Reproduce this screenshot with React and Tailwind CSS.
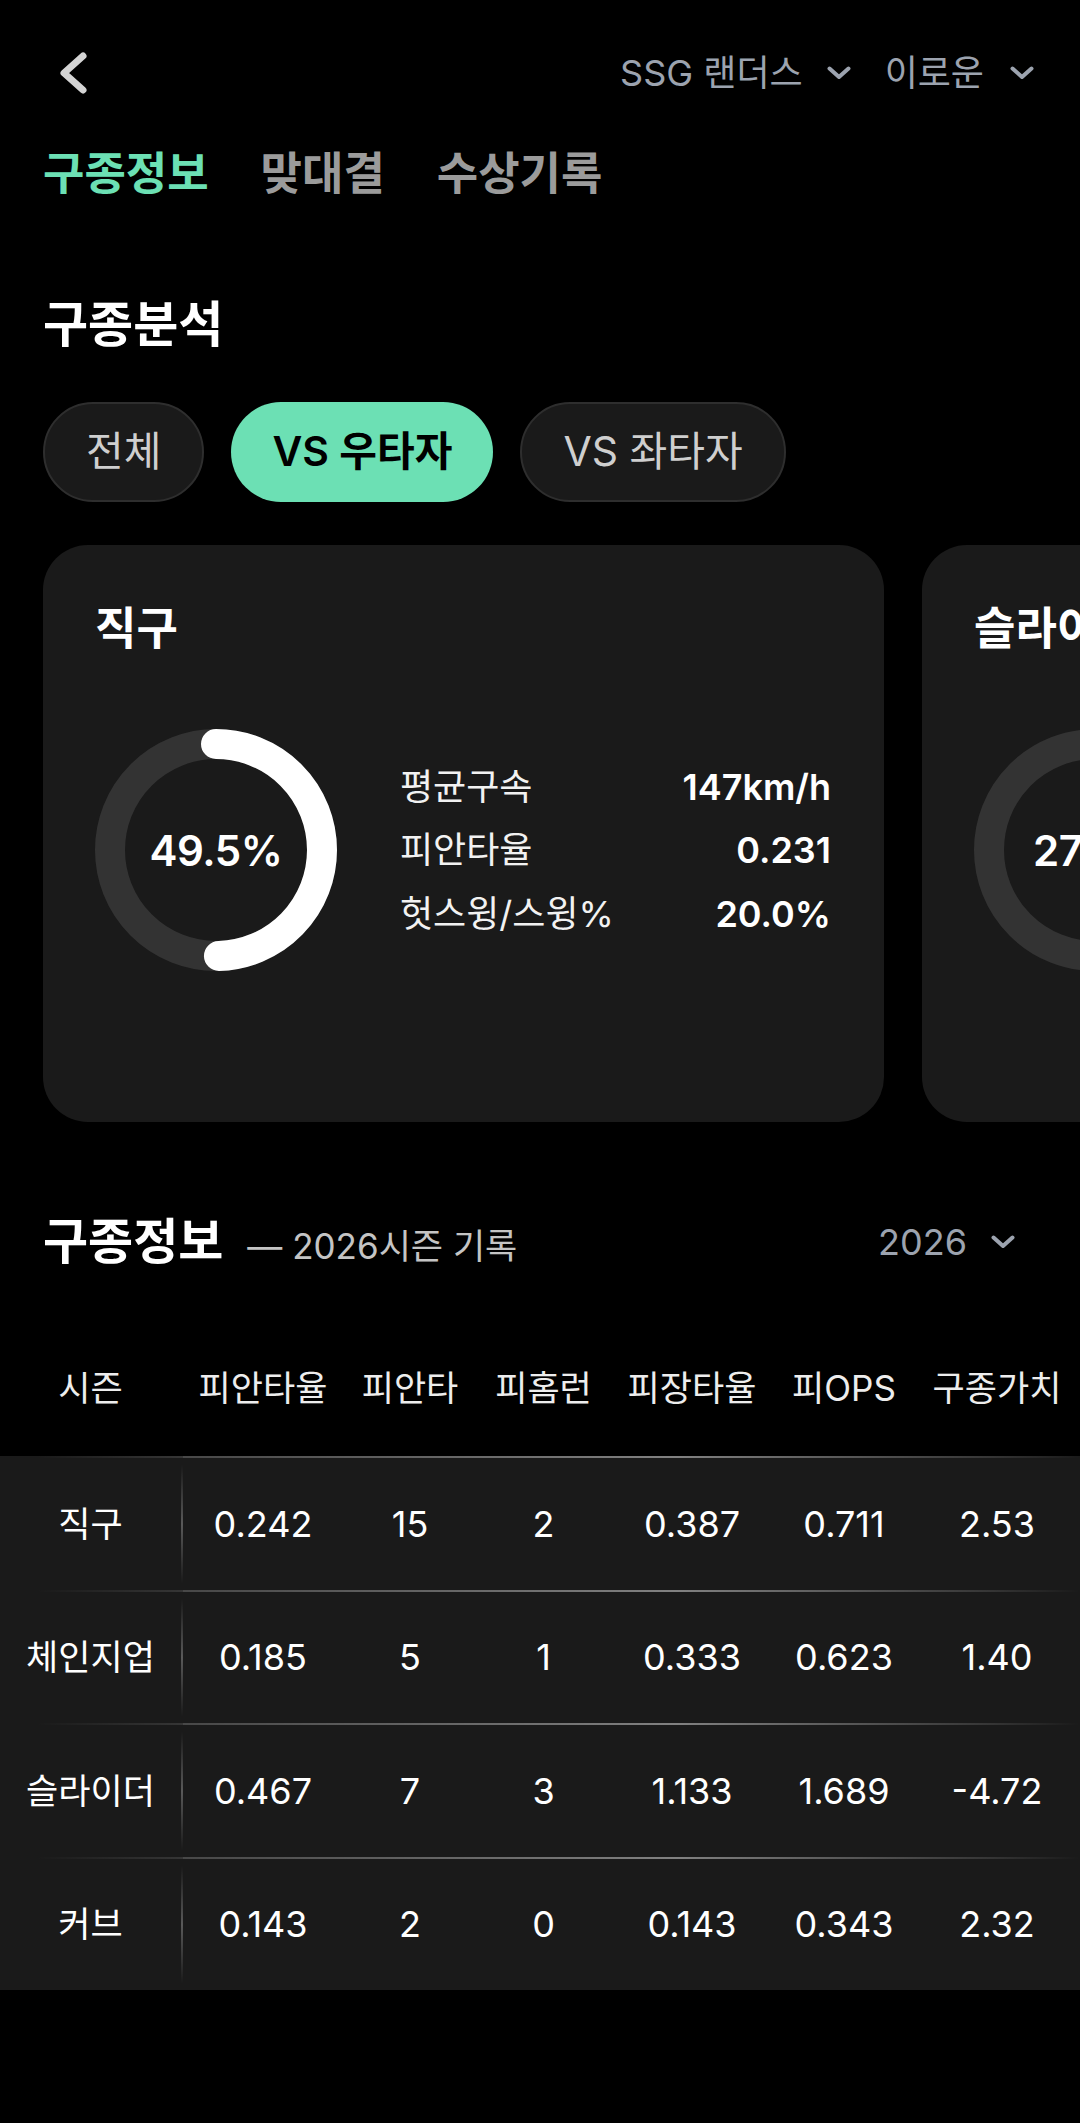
import React from "react";

const FONT = "font-['Inter','Noto_Sans_CJK_KR',sans-serif]";

function ChevronDown({ className = "" }) {
  return (
    <svg width="24" height="14" viewBox="0 0 24 14" className={className}>
      <polyline points="2.5,2.5 12,11 21.5,2.5" fill="none" stroke="#9ca3af" strokeWidth="4" strokeLinecap="round" strokeLinejoin="round" />
    </svg>
  );
}

function Donut({ pct, label }) {
  const r = 106;
  const c = 2 * Math.PI * r;
  return (
    <div className="relative w-[242px] h-[242px] shrink-0">
      <svg width="242" height="242" viewBox="0 0 242 242">
        <circle cx="121" cy="121" r={r} fill="none" stroke="#333333" strokeWidth="30" />
        <circle
          cx="121"
          cy="121"
          r={r}
          fill="none"
          stroke="#ffffff"
          strokeWidth="30"
          strokeLinecap="round"
          strokeDasharray={`${(pct / 100) * c} ${c}`}
          transform="rotate(-90 121 121)"
        />
      </svg>
      <div className="absolute inset-0 flex items-center justify-center text-white text-[42px] font-semibold tracking-[-0.5px]">
        {label}
      </div>
    </div>
  );
}

function PitchCard({ title, pct, label, stats }) {
  return (
    <div className="w-[841px] h-[577px] shrink-0 rounded-[45px] bg-[#1a1a1a] pt-[58px] pl-[52px] pr-[53px]">
      <div className="text-white text-[45px] font-bold leading-[52px]">{title}</div>
      <div className="mt-[74px] flex items-center">
        <Donut pct={pct} label={label} />
        <div className="ml-[63px] flex-1 flex flex-col">
          {stats.map(([k, v]) => (
            <div key={k} className="h-[63.5px] flex items-center justify-between text-[36px] text-[#f2f2f2]">
              <span>{k}</span>
              <span className="font-semibold text-white">{v}</span>
            </div>
          ))}
        </div>
      </div>
    </div>
  );
}

const COLS = ["w-[181px]", "w-[160px]", "w-[134px]", "w-[133px]", "w-[164px]", "w-[140px]", "w-[166px]"];
const HEAD = ["시즌", "피안타율", "피안타", "피홈런", "피장타율", "피OPS", "구종가치"];
const ROWS = [
  ["직구", "0.242", "15", "2", "0.387", "0.711", "2.53"],
  ["체인지업", "0.185", "5", "1", "0.333", "0.623", "1.40"],
  ["슬라이더", "0.467", "7", "3", "1.133", "1.689", "-4.72"],
  ["커브", "0.143", "2", "0", "0.143", "0.343", "2.32"],
];

function RowLine() {
  return (
    <div className="flex h-[2px]">
      <div className="w-[183px] h-full bg-[linear-gradient(to_right,rgba(255,255,255,0)_20%,rgba(255,255,255,0.12))]" />
      <div className="flex-1 h-full bg-[linear-gradient(to_right,rgba(255,255,255,0.2),rgba(255,255,255,0.45)_55%,rgba(255,255,255,0.12)_90%,rgba(255,255,255,0))]" />
    </div>
  );
}

function VLine() {
  return <div className="w-[2px] self-stretch bg-[linear-gradient(to_bottom,rgba(255,255,255,0)_5%,rgba(255,255,255,0.28)_50%,rgba(255,255,255,0)_95%)]" />;
}

export default function App() {
  const cards = [
    {
      title: "직구",
      pct: 49.5,
      label: "49.5%",
      stats: [
        ["평균구속", "147km/h"],
        ["피안타율", "0.231"],
        ["헛스윙/스윙%", "20.0%"],
      ],
    },
    {
      title: "슬라이더",
      pct: 27.3,
      label: "27.3%",
      stats: [
        ["평균구속", "134km/h"],
        ["피안타율", "0.467"],
        ["헛스윙/스윙%", "31.2%"],
      ],
    },
  ];

  return (
    <div className={`${FONT} bg-black min-h-[2123px] w-[1080px] overflow-hidden text-white`}>
      {/* Top bar */}
      <div className="h-[146px] flex items-center justify-between pl-[58px] pr-[46px]">
        <svg width="32" height="44" viewBox="0 0 32 44">
          <polyline points="25,5 6,22 25,39" fill="none" stroke="#d4d4d4" strokeWidth="7" strokeLinecap="round" strokeLinejoin="round" />
        </svg>
        <div className="flex items-center text-[36px] text-[#9ca3af]">
          <span>SSG 랜더스</span>
          <ChevronDown className="ml-[24px]" />
          <span className="ml-[34px]">이로운</span>
          <ChevronDown className="ml-[26px]" />
        </div>
      </div>

      {/* Tabs */}
      <div className="h-[56px] flex items-center pl-[43px] gap-[52px] text-[45px] font-bold">
        <span className="text-[#6ce0b4]">구종정보</span>
        <span className="text-[#9b9b9b]">맞대결</span>
        <span className="text-[#9b9b9b]">수상기록</span>
      </div>

      {/* 구종분석 */}
      <div className="mt-[95px] pl-[43px] h-[56px] flex items-center text-[49px] font-bold text-white">구종분석</div>

      <div className="mt-[49px] pl-[43px] flex gap-[27px]">
        <div className="h-[100px] px-[41px] rounded-full bg-[#1a1a1a] border-2 border-[#2e2e2e] flex items-center text-[41px] text-[#cfcfcf]">
          전체
        </div>
        <div className="h-[100px] px-[41px] rounded-full bg-[#6ce0b4] flex items-center text-[41px] font-semibold text-black">
          VS 우타자
        </div>
        <div className="h-[100px] px-[41px] rounded-full bg-[#1a1a1a] border-2 border-[#2e2e2e] flex items-center text-[41px] text-[#cfcfcf]">
          VS 좌타자
        </div>
      </div>

      {/* Cards */}
      <div className="mt-[43px] pl-[43px] flex gap-[38px] overflow-hidden">
        {cards.map((c) => (
          <PitchCard key={c.title} {...c} />
        ))}
      </div>

      {/* 구종정보 header */}
      <div className="mt-[92px] h-[56px] flex items-center justify-between pl-[43px] pr-[65px]">
        <div className="flex items-baseline">
          <span className="text-[49px] font-bold text-white">구종정보</span>
          <span className="ml-[24px] text-[35px] text-[#c4c4c4]">— 2026시즌 기록</span>
        </div>
        <div className="flex items-center text-[36px] text-[#9ca3af]">
          <span>2026</span>
          <ChevronDown className="ml-[24px]" />
        </div>
      </div>

      {/* Table */}
      <div className="mt-[50px]">
        <div className="h-[136px] flex items-center text-[35px] text-[#ededed]">
          {HEAD.map((h, i) => (
            <React.Fragment key={h}>
              <div className={`${COLS[i]} text-center whitespace-nowrap`}>{h}</div>
              {i === 0 && <div className="w-[2px]" />}
            </React.Fragment>
          ))}
        </div>
        <div className="bg-[#1a1a1a]">
          {ROWS.map((row, ri) => (
            <div key={ri}>
              <RowLine />
              <div className="h-[131.5px] flex items-center text-[36px] text-white">
                {row.map((cell, i) => (
                  <React.Fragment key={i}>
                    <div className={`${COLS[i]} text-center whitespace-nowrap ${i === 0 ? "text-[35px]" : ""}`}>{cell}</div>
                    {i === 0 && <VLine />}
                  </React.Fragment>
                ))}
              </div>
            </div>
          ))}
        </div>
      </div>
    </div>
  );
}
